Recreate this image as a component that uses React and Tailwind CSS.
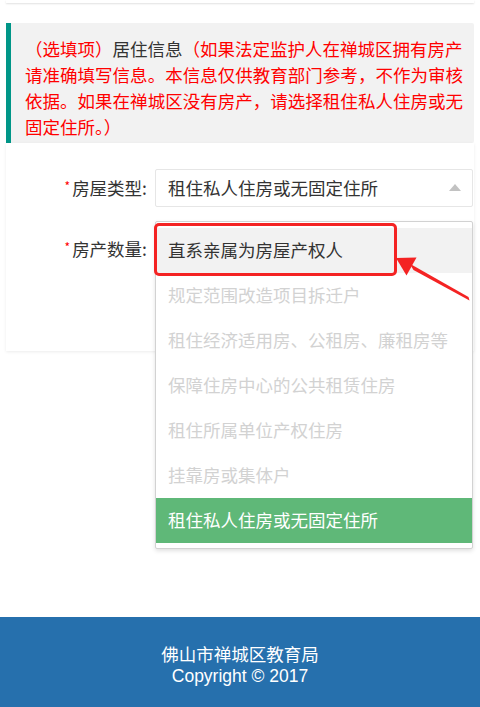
import React from "react";

const items = [
  { t: "直系亲属为房屋产权人", kind: "hover" },
  { t: "规定范围改造项目拆迁户", kind: "disabled" },
  { t: "租住经济适用房、公租房、廉租房等", kind: "disabled" },
  { t: "保障住房中心的公共租赁住房", kind: "disabled" },
  { t: "租住所属单位产权住房", kind: "disabled" },
  { t: "挂靠房或集体户", kind: "disabled" },
  { t: "租住私人住房或无固定住所", kind: "selected" },
];

function Label({ children }) {
  return (
    <div className="flex w-[142px] shrink-0 items-center justify-end pr-[1px] text-[#333]">
      <span className="mr-[2px] -mt-[4px] text-[12px] leading-none text-[#ff0000]">*</span>
      <span>{children}</span>
    </div>
  );
}

export default function App() {
  return (
    <div className="flex min-h-[707px] flex-col bg-white font-['Noto_Sans_CJK_SC','Noto_Sans',sans-serif] text-[17.5px] text-[#333]">
      <div className="relative flex-1">
        <div className="mx-[6px] h-[3px] bg-white shadow-[0_1px_2px_rgba(0,0,0,0.12)]" />

        <div className="mx-[6px] mt-[20px] rounded-r-[2px] border-l-[5px] border-[#009688] bg-[#f2f2f2] pb-[3px] pl-[14px] pr-[11px] pt-[13px] leading-[26px] text-[#ff0000]">
          <div className="whitespace-nowrap">
            （选填项）<span className="text-[#333]">居住信息</span>（如果法定监护人在禅城区拥有房产
          </div>
          <div className="text-justify [text-align-last:justify]">
            请准确填写信息。本信息仅供教育部门参考，不作为审核
          </div>
          <div className="text-justify [text-align-last:justify]">
            依据。如果在禅城区没有房产，请选择租住私人住房或无
          </div>
          <div>固定住所。）</div>
        </div>

        <div className="mx-[6px] h-[208px] bg-white pt-[26px] shadow-[0_1px_3px_rgba(0,0,0,0.08)]">
          <div className="flex h-[38px] items-stretch">
            <Label>房屋类型:</Label>
            <div className="relative ml-[7px] w-[318px]">
              <div className="flex h-full items-center rounded-[2px] border border-[#e6e6e6] bg-white pl-[12px] leading-none">
                租住私人住房或无固定住所
              </div>
              <div className="absolute right-[12px] top-[15px] h-0 w-0 border-x-[6px] border-b-[7px] border-x-transparent border-b-[#c2c2c2]" />
              <div className="absolute left-0 top-[52px] z-10 w-full rounded-[2px] border border-[#d2d2d2] bg-white pb-[5px] pt-[6px] shadow-[0_2px_4px_rgba(0,0,0,0.12)]">
                {items.map((it) => (
                  <div
                    key={it.t}
                    className={
                      it.kind === "hover"
                        ? "flex h-[45px] items-center bg-[#f2f2f2] pl-[12px] text-[#333]"
                        : it.kind === "selected"
                        ? "flex h-[45px] items-center bg-[#5fb878] pl-[12px] text-white"
                        : "flex h-[45px] items-center pl-[12px] text-[#d2d2d2]"
                    }
                  >
                    {it.t}
                  </div>
                ))}
              </div>
            </div>
          </div>
          <div className="mt-[23px] flex h-[38px] items-stretch">
            <Label>房产数量:</Label>
            <div className="ml-[7px] w-[318px] rounded-[2px] border border-[#e6e6e6] bg-white" />
          </div>
        </div>

        <div className="absolute left-[154px] top-[223px] z-20 h-[53px] w-[243px] rounded-[5px] border-[3px] border-[#f42323]" />
        <svg className="absolute left-0 top-0 z-20" width="480" height="320" viewBox="0 0 480 320">
          <polygon points="396,258 416.5,257.5 406.5,275.5" fill="#f42323" />
          <polygon points="409.5,263.5 413.5,270 469.5,300.5 468.5,297" fill="#f42323" />
        </svg>
      </div>

      <footer className="h-[90px] bg-[#2670ad] pt-[26px] text-center leading-[22px] text-white">
        <div>佛山市禅城区教育局</div>
        <div className="font-['Liberation_Sans',Arial,sans-serif]">Copyright © 2017</div>
      </footer>
    </div>
  );
}
